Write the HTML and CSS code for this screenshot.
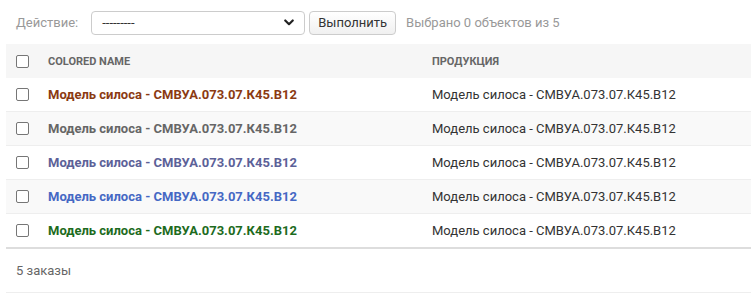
FILE: index.html
```html
<!DOCTYPE html>
<html lang="ru">
<head>
    <meta charset="UTF-8">
    <title>Заказы</title>
    <link rel="stylesheet" href="styles.css">
</head>
<body>
    <div class="changelist">
        <div class="actions">
            <label class="action-label">Действие:</label>
            <div class="select-box">
                <span>---------</span>
                <svg class="chevron" width="10" height="7" viewBox="0 0 12 8"><path d="M1.5 1.5 L6 6 L10.5 1.5" fill="none" stroke="#222" stroke-width="2.6" stroke-linecap="round" stroke-linejoin="round"/></svg>
            </div>
            <button class="go-button">Выполнить</button>
            <span class="action-counter">Выбрано 0 объектов из 5</span>
        </div>

        <table class="result-list">
            <thead>
                <tr>
                    <th class="check-col"><span class="checkbox"></span></th>
                    <th class="name-col">Colored name</th>
                    <th>Продукция</th>
                </tr>
            </thead>
            <tbody>
                <tr>
                    <td class="check-col"><span class="checkbox"></span></td>
                    <td><a class="item brown">Модель силоса - СМВУА.073.07.К45.В12</a></td>
                    <td>Модель силоса - СМВУА.073.07.К45.В12</td>
                </tr>
                <tr class="alt">
                    <td class="check-col"><span class="checkbox"></span></td>
                    <td><a class="item gray">Модель силоса - СМВУА.073.07.К45.В12</a></td>
                    <td>Модель силоса - СМВУА.073.07.К45.В12</td>
                </tr>
                <tr>
                    <td class="check-col"><span class="checkbox"></span></td>
                    <td><a class="item slate">Модель силоса - СМВУА.073.07.К45.В12</a></td>
                    <td>Модель силоса - СМВУА.073.07.К45.В12</td>
                </tr>
                <tr class="alt">
                    <td class="check-col"><span class="checkbox"></span></td>
                    <td><a class="item blue">Модель силоса - СМВУА.073.07.К45.В12</a></td>
                    <td>Модель силоса - СМВУА.073.07.К45.В12</td>
                </tr>
                <tr class="last">
                    <td class="check-col"><span class="checkbox"></span></td>
                    <td><a class="item green">Модель силоса - СМВУА.073.07.К45.В12</a></td>
                    <td>Модель силоса - СМВУА.073.07.К45.В12</td>
                </tr>
            </tbody>
        </table>

        <p class="paginator">5 заказы</p>
    </div>
</body>
</html>
```

FILE: styles.css
```css
body {
    margin: 0;
    font-family: Roboto, "Liberation Sans", sans-serif;
    font-size: 13px;
    color: #333;
    background: #fff;
}
.changelist {
    padding-left: 6px;
}
.actions {
    display: flex;
    align-items: center;
    height: 44px;
    padding-left: 10px;
}
.action-label {
    color: #999;
    margin-right: 13px;
}
.select-box {
    display: flex;
    align-items: center;
    justify-content: space-between;
    box-sizing: border-box;
    width: 214px;
    height: 24px;
    padding: 0 10px 0 10px;
    border: 1px solid #ccc;
    border-radius: 4px;
    color: #333;
    font-size: 13px;
    margin-top: 1px;
}
.go-button {
    box-sizing: border-box;
    height: 24px;
    margin-left: 4px;
    padding: 0 8px;
    border: 1px solid #ccc;
    border-radius: 4px;
    background: linear-gradient(#fff, #f0f0f0);
    font-family: inherit;
    font-size: 13px;
    color: #333;
    margin-top: 1px;
}
.action-counter {
    color: #999;
    margin-left: 10px;
}
.result-list {
    width: 100%;
    border-collapse: collapse;
    table-layout: fixed;
}
.result-list th {
    background: #f6f6f6;
    height: 34px;
    padding: 0 8px;
    text-align: left;
    font-size: 11px;
    font-weight: bold;
    text-transform: uppercase;
    color: #666;
}
.result-list td {
    height: 33px;
    padding: 0 8px;
    border-bottom: 1px solid #eee;
    color: #333;
}
.result-list tr.alt td {
    background: #f9f9f9;
}
.result-list tr.last td {
    border-bottom: 2px solid #ddd;
}
.result-list .check-col {
    width: 18px;
    padding: 0 6px 0 10px;
}
.result-list .name-col {
    width: 368px;
}
.checkbox {
    display: block;
    box-sizing: border-box;
    width: 13px;
    height: 13px;
    border: 1px solid #767676;
    border-radius: 2px;
    background: #fff;
}
.item {
    font-weight: bold;
    text-decoration: none;
}
.brown { color: #8b3a12; }
.gray { color: #666; }
.slate { color: #5c6198; }
.blue { color: #4568c4; }
.green { color: #1d6b1d; }
.paginator {
    margin: 0;
    height: 43px;
    line-height: 43px;
    padding-left: 10px;
    color: #666;
    border-bottom: 1px solid #eee;
}
```
